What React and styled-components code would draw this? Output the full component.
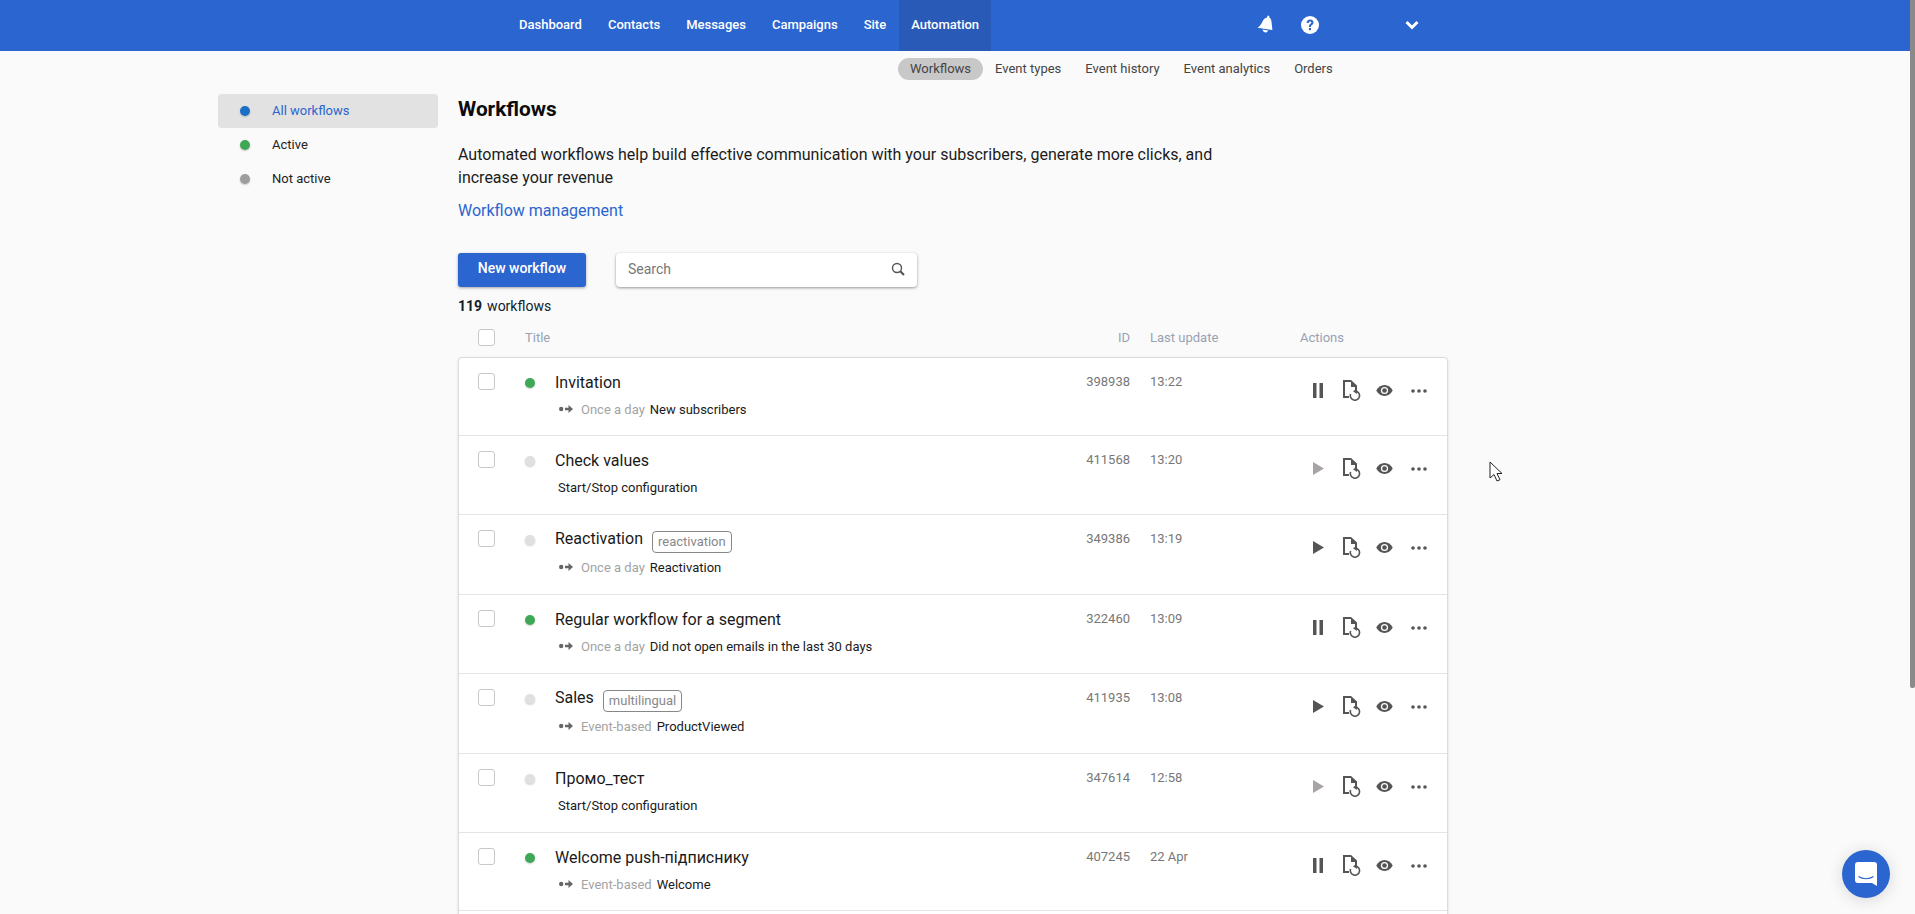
import React from 'react';
import styled, { createGlobalStyle } from 'styled-components';

const GlobalStyle = createGlobalStyle`
  html, body {
    margin: 0;
    height: 100%;
    overflow: hidden;
  }
  body {
    font-family: Roboto, "Noto Sans", sans-serif;
    background: #fafafa;
    color: #1a1a1a;
  }
  * {
    box-sizing: border-box;
  }
`;

const Page = styled.div`
  position: relative;
  height: 914px;
  overflow: hidden;
  background: #fafafa;
`;

const ScrollThumb = styled.div`
  position: absolute;
  top: 0;
  right: 0;
  width: 5px;
  height: 688px;
  background: #8a8a8a;
  border-radius: 0 0 2px 2px;
`;

const TopBar = styled.header`
  height: 51px;
  background: #2b65cf;
  display: flex;
  align-items: stretch;
  padding-left: 506px;
`;

const TopLink = styled.a`
  display: flex;
  align-items: center;
  padding: 0 ${p => (p.$active ? '12px' : '13px')} 2px;
  color: #fff;
  font-size: 13px;
  font-weight: 500;
  background: ${p => (p.$active ? '#2a5ab8' : 'transparent')};
`;

const TopIcons = styled.div`
  display: flex;
  align-items: center;
  margin-left: 266px;
  padding-bottom: 2px;
  color: #fff;
`;

const BellWrap = styled.span`
  display: flex;
  margin-right: 28px;
`;

const HelpWrap = styled.span`
  display: flex;
  margin-right: 86px;
`;

const SubBar = styled.nav`
  height: 36px;
  display: flex;
  align-items: center;
  padding-left: 898px;
`;

const SubLink = styled.a`
  height: 22px;
  line-height: 22px;
  padding: 0 12px;
  font-size: 13px;
  color: #444;
  border-radius: 11px;
  background: ${p => (p.$active ? '#c8c8c8' : 'transparent')};
`;

const Layout = styled.div`
  display: flex;
  align-items: flex-start;
  padding: 7px 0 0 218px;
`;

const Sidebar = styled.aside`
  width: 220px;
  margin-right: 20px;
`;

const SideItem = styled.a`
  height: 34px;
  display: flex;
  align-items: center;
  padding: 0 0 1px 22px;
  font-size: 13px;
  color: ${p => (p.$active ? '#2b65cf' : '#222')};
  background: ${p => (p.$active ? '#e2e2e2' : 'transparent')};
  border-radius: 4px;
`;

const Dot = styled.i`
  display: block;
  flex: none;
  width: 10px;
  height: 10px;
  border-radius: 50%;
  background: ${p => p.$color};
  box-shadow: 0 1px 2px rgba(0, 0, 0, 0.2);
`;

const SideDot = styled(Dot)`
  margin-right: 22px;
`;

const Main = styled.main`
  width: 991px;
`;

const Title = styled.h1`
  margin: 1px 0 20px;
  font-size: 20.800px;
  line-height: 28px;
  font-weight: 700;
  color: #0c0c0c;
`;

const Lead = styled.p`
  margin: 0 0 10px;
  width: 780px;
  font-size: 16px;
  line-height: 23px;
  color: #1c1c1c;
`;

const ManageLink = styled.a`
  display: block;
  font-size: 16px;
  line-height: 23px;
  color: #2b65cf;
`;

const Toolbar = styled.div`
  display: flex;
  gap: 30px;
  margin-top: 31px;
`;

const PrimaryButton = styled.button`
  width: 128px;
  height: 34px;
  border: 0;
  border-radius: 3px;
  background: #2b65cf;
  color: #fff;
  font: 500 14px Roboto, sans-serif;
  padding: 0 0 4px;
  box-shadow: 0 1px 3px rgba(0, 0, 0, 0.35);
`;

const SearchBox = styled.div`
  width: 301px;
  height: 34px;
  display: flex;
  align-items: center;
  justify-content: space-between;
  padding: 0 12px 2px;
  background: #fff;
  border-radius: 4px;
  box-shadow: 0 1px 3px rgba(0, 0, 0, 0.4);
  font-size: 14px;
  color: #777;
`;

const Count = styled.div`
  margin-top: 10px;
  font-size: 14px;
  line-height: 19px;
  color: #10202e;

  b {
    font-weight: 700;
    margin-right: 5px;
  }
`;

const TableHead = styled.div`
  display: grid;
  grid-template-columns: 47px 519px 86px 20px 150px 1fr;
  align-items: center;
  height: 41px;
  padding: 5px 0 3px 20px;
  font-size: 13px;
  color: #98a2b3;
`;

const HeadId = styled.span`
  text-align: right;
`;

const Check = styled.span`
  display: block;
  width: 17px;
  height: 17px;
  border: 1px solid #c8c8c8;
  border-radius: 3px;
  background: #fff;
`;

const Card = styled.section`
  width: 990px;
  background: #fff;
  border: 1px solid #dcdcdc;
  border-radius: 4px;
  box-shadow: 0 1px 3px rgba(0, 0, 0, 0.12);
`;

const Row = styled.div`
  display: grid;
  grid-template-columns: 47px 30px 489px 86px 20px 154px 1fr;
  height: ${p => p.$height}px;
  padding: 15px 0 0 19px;
  border-bottom: 1px solid #e4e4e4;
  &:last-child {
    border-bottom: 0;
  }
`;

const RowDot = styled(Dot)`
  margin-top: 5px;
`;

const Name = styled.div`
  display: flex;
  align-items: center;
  height: 18px;
  margin-top: ${p => (p.$tag ? '-1px' : '0')};
  font-size: 16px;
  color: #1a1a1a;
`;

const Tag = styled.span`
  height: 22px;
  line-height: 20px;
  margin: 8px 0 0 9px;
  padding: 0 5px;
  font-size: 13px;
  color: #888;
  border: 1px solid #888;
  border-radius: 4px;
`;

const Meta = styled.div`
  display: flex;
  align-items: center;
  height: 18px;
  margin-top: ${p => (p.$tag ? '11px' : '9px')};
  padding-left: ${p => (p.$flat ? '3px' : '4px')};
  font-size: 13px;
  color: #1a1a1a;
  white-space: nowrap;
`;

const Kind = styled.span`
  margin: 0 5px 0 8px;
  color: #a3a3a3;
`;

const Cell = styled.span`
  display: block;
  height: 18px;
  line-height: 18px;
  font-size: 13px;
  color: #777;
`;

const IdCell = styled(Cell)`
  text-align: right;
`;

const Actions = styled.div`
  display: flex;
  align-items: center;
  height: 35px;
  color: #555;
`;

const ActionSlot = styled.span`
  display: flex;
  justify-content: center;
  width: ${p => p.$w}px;
  color: ${p => (p.$muted ? '#a8a4a4' : 'inherit')};
`;

const ChatButton = styled.button`
  position: absolute;
  right: 25px;
  bottom: 16px;
  width: 48px;
  height: 48px;
  padding: 0;
  display: flex;
  align-items: center;
  justify-content: center;
  border: 0;
  border-radius: 50%;
  background: #2b65cf;
  box-shadow: 0 2px 16px rgba(0, 0, 0, 0.14);
`;

const Pointer = styled.svg`
  position: absolute;
  left: 1489px;
  top: 461px;
`;

const Bell = () => (
  <svg width="16" height="19" viewBox="0 0 16 19" fill="currentColor">
    <path d="M11.200 0.500c.8 0 1.300.9 1.200 1.900 1.500 1 2.100 2.900 2.200 5.100l.8 7.500L0.500 12.800c2.500-1.800 4-3.900 5-6.300 1-2.300 2.500-3.700 4.600-4 0-1 .5-2 1.100-2z" />
    <path d="M5.500 14.500l5.600 1.100c-.5 1.500-1.500 2-2.800 1.800-1.400-.2-2.500-1.300-2.800-2.900z" />
  </svg>
);

const Help = () => (
  <svg width="18" height="18" viewBox="0 0 18 18">
    <circle cx="9" cy="9" r="9" fill="currentColor" />
    <path d="M5.600 7c0-2.200 1.500-3.400 3.500-3.400 1.900 0 3.400 1.100 3.400 2.900 0 2.500-2.700 2.500-2.700 4.500H7.900c0-3 2.400-3.100 2.400-4.400 0-.7-.5-1.100-1.200-1.100-.8 0-1.300.6-1.300 1.500H5.600z" fill="#2b65cf" />
    <rect x="7.900" y="12" width="2.100" height="2.200" fill="#2b65cf" />
  </svg>
);

const Chevron = () => (
  <svg width="14" height="10" viewBox="0 0 14 10" fill="none" stroke="#fff" strokeWidth="3">
    <path d="M1.500 2l5.500 5.500L12.500 2" />
  </svg>
);

const SearchIcon = () => (
  <svg width="14" height="14" viewBox="0 0 14 14" fill="none" stroke="#555" strokeWidth="1.400">
    <circle cx="6" cy="6" r="4.500" />
    <path d="M9.300 9.300L13 13" strokeWidth="2" />
  </svg>
);

const Flow = () => (
  <svg width="14" height="8" viewBox="0 0 14 8" fill="#666">
    <circle cx="2.200" cy="4" r="2.200" />
    <path d="M6 2.800h3.500V0L14 4 9.500 8V5.200H6z" />
  </svg>
);

const Pause = () => (
  <svg width="10" height="15" viewBox="0 0 10 15" fill="currentColor">
    <rect width="3.500" height="15" />
    <rect x="6.500" width="3.500" height="15" />
  </svg>
);

const Play = () => (
  <svg width="11" height="13" viewBox="0 0 11 13" fill="currentColor">
    <path d="M0 0l11 6.500L0 13z" />
  </svg>
);

const DocRestart = () => (
  <svg width="18" height="21" viewBox="0 0 18 21" fill="none" stroke="currentColor" strokeWidth="2">
    <path d="M6 17H1V1h7" />
    <path d="M8 0l6 5.500v5h-2V7H8z" fill="currentColor" stroke="none" />
    <path d="M7.600 14a4.600 4.600 0 1 0 4.600-3" strokeWidth="1.600" />
    <path d="M14 8.500V14l-4-2.700z" fill="currentColor" stroke="none" />
  </svg>
);

const Eye = () => (
  <svg width="17" height="11" viewBox="0 0 18 12">
    <path d="M9 0c4 0 7 2.700 9 6-2 3.300-5 6-9 6S2 9.300 0 6c2-3.300 5-6 9-6z" fill="currentColor" />
    <circle cx="9" cy="6" r="3.900" fill="#fff" />
    <circle cx="9" cy="6" r="2.500" fill="currentColor" />
  </svg>
);

const Dots = () => (
  <svg width="16" height="4" viewBox="0 0 16 4" fill="currentColor">
    <circle cx="2" cy="2" r="1.800" />
    <circle cx="8" cy="2" r="1.800" />
    <circle cx="14" cy="2" r="1.800" />
  </svg>
);

const ChatIcon = () => (
  <svg width="22" height="24" viewBox="0 0 22 24">
    <path d="M3 0h16a3 3 0 0 1 3 3v21l-5-3H3a3 3 0 0 1-3-3V3a3 3 0 0 1 3-3z" fill="#fff" />
    <path d="M3.500 14.500c4 3 11 3 15 0" fill="none" stroke="#2b65cf" strokeWidth="1.200" />
  </svg>
);

const colors = { on: '#3fa856', off: '#e0e0e0' };

const workflows = [
  { name: 'Invitation', id: '398938', time: '13:22', state: 'on', kind: 'Once a day', text: 'New subscribers', height: 78 },
  { name: 'Check values', id: '411568', time: '13:20', state: 'off', muted: true, text: 'Start/Stop configuration', height: 79 },
  { name: 'Reactivation', tag: 'reactivation', id: '349386', time: '13:19', state: 'off', kind: 'Once a day', text: 'Reactivation', height: 80 },
  { name: 'Regular workflow for a segment', id: '322460', time: '13:09', state: 'on', kind: 'Once a day', text: 'Did not open emails in the last 30 days', height: 79 },
  { name: 'Sales', tag: 'multilingual', id: '411935', time: '13:08', state: 'off', kind: 'Event-based', text: 'ProductViewed', height: 80 },
  { name: 'Промо_тест', id: '347614', time: '12:58', state: 'off', muted: true, text: 'Start/Stop configuration', height: 79 },
  { name: 'Welcome push-підписнику', id: '407245', time: '22 Apr', state: 'on', kind: 'Event-based', text: 'Welcome', height: 78 },
];

const WorkflowRow = ({ w }) => (
  <Row $height={w.height}>
    <Check />
    <RowDot $color={colors[w.state]} />
    <div>
      <Name $tag={!!w.tag}>
        {w.name}
        {w.tag && <Tag>{w.tag}</Tag>}
      </Name>
      <Meta $tag={!!w.tag} $flat={!w.kind}>
        {w.kind && <Flow />}
        {w.kind && <Kind>{w.kind}</Kind>}
        {w.text}
      </Meta>
    </div>
    <IdCell>{w.id}</IdCell>
    <span />
    <Cell>{w.time}</Cell>
    <Actions>
      <ActionSlot $w={28} $muted={w.muted}>{w.state === 'on' ? <Pause /> : <Play />}</ActionSlot>
      <ActionSlot $w={40}><DocRestart /></ActionSlot>
      <ActionSlot $w={25}><Eye /></ActionSlot>
      <ActionSlot $w={43}><Dots /></ActionSlot>
    </Actions>
  </Row>
);

export default function App() {
  return (
    <Page>
      <GlobalStyle />
      <TopBar>
        <TopLink>Dashboard</TopLink>
        <TopLink>Contacts</TopLink>
        <TopLink>Messages</TopLink>
        <TopLink>Campaigns</TopLink>
        <TopLink>Site</TopLink>
        <TopLink $active>Automation</TopLink>
        <TopIcons>
          <BellWrap><Bell /></BellWrap>
          <HelpWrap><Help /></HelpWrap>
          <Chevron />
        </TopIcons>
      </TopBar>
      <SubBar>
        <SubLink $active>Workflows</SubLink>
        <SubLink>Event types</SubLink>
        <SubLink>Event history</SubLink>
        <SubLink>Event analytics</SubLink>
        <SubLink>Orders</SubLink>
      </SubBar>
      <Layout>
        <Sidebar>
          <SideItem $active><SideDot $color="#1a6fc9" />All workflows</SideItem>
          <SideItem><SideDot $color={colors.on} />Active</SideItem>
          <SideItem><SideDot $color="#9e9e9e" />Not active</SideItem>
        </Sidebar>
        <Main>
          <Title>Workflows</Title>
          <Lead>Automated workflows help build effective communication with your subscribers, generate more clicks, and increase your revenue</Lead>
          <ManageLink>Workflow management</ManageLink>
          <Toolbar>
            <PrimaryButton>New workflow</PrimaryButton>
            <SearchBox>Search<SearchIcon /></SearchBox>
          </Toolbar>
          <Count><b>119</b>workflows</Count>
          <TableHead>
            <Check />
            <span>Title</span>
            <HeadId>ID</HeadId>
            <span />
            <span>Last update</span>
            <span>Actions</span>
          </TableHead>
          <Card>
            {workflows.map(w => <WorkflowRow key={w.id} w={w} />)}
            <Row $height={80} />
          </Card>
        </Main>
      </Layout>
      <ScrollThumb />
      <Pointer width="14" height="22" viewBox="0 0 14 22">
        <path d="M1 1v16l4-3.500 3 6.500 3-1.300-3-6.200h5z" fill="#fff" stroke="#222" strokeWidth="1" />
      </Pointer>
      <ChatButton><ChatIcon /></ChatButton>
    </Page>
  );
}
